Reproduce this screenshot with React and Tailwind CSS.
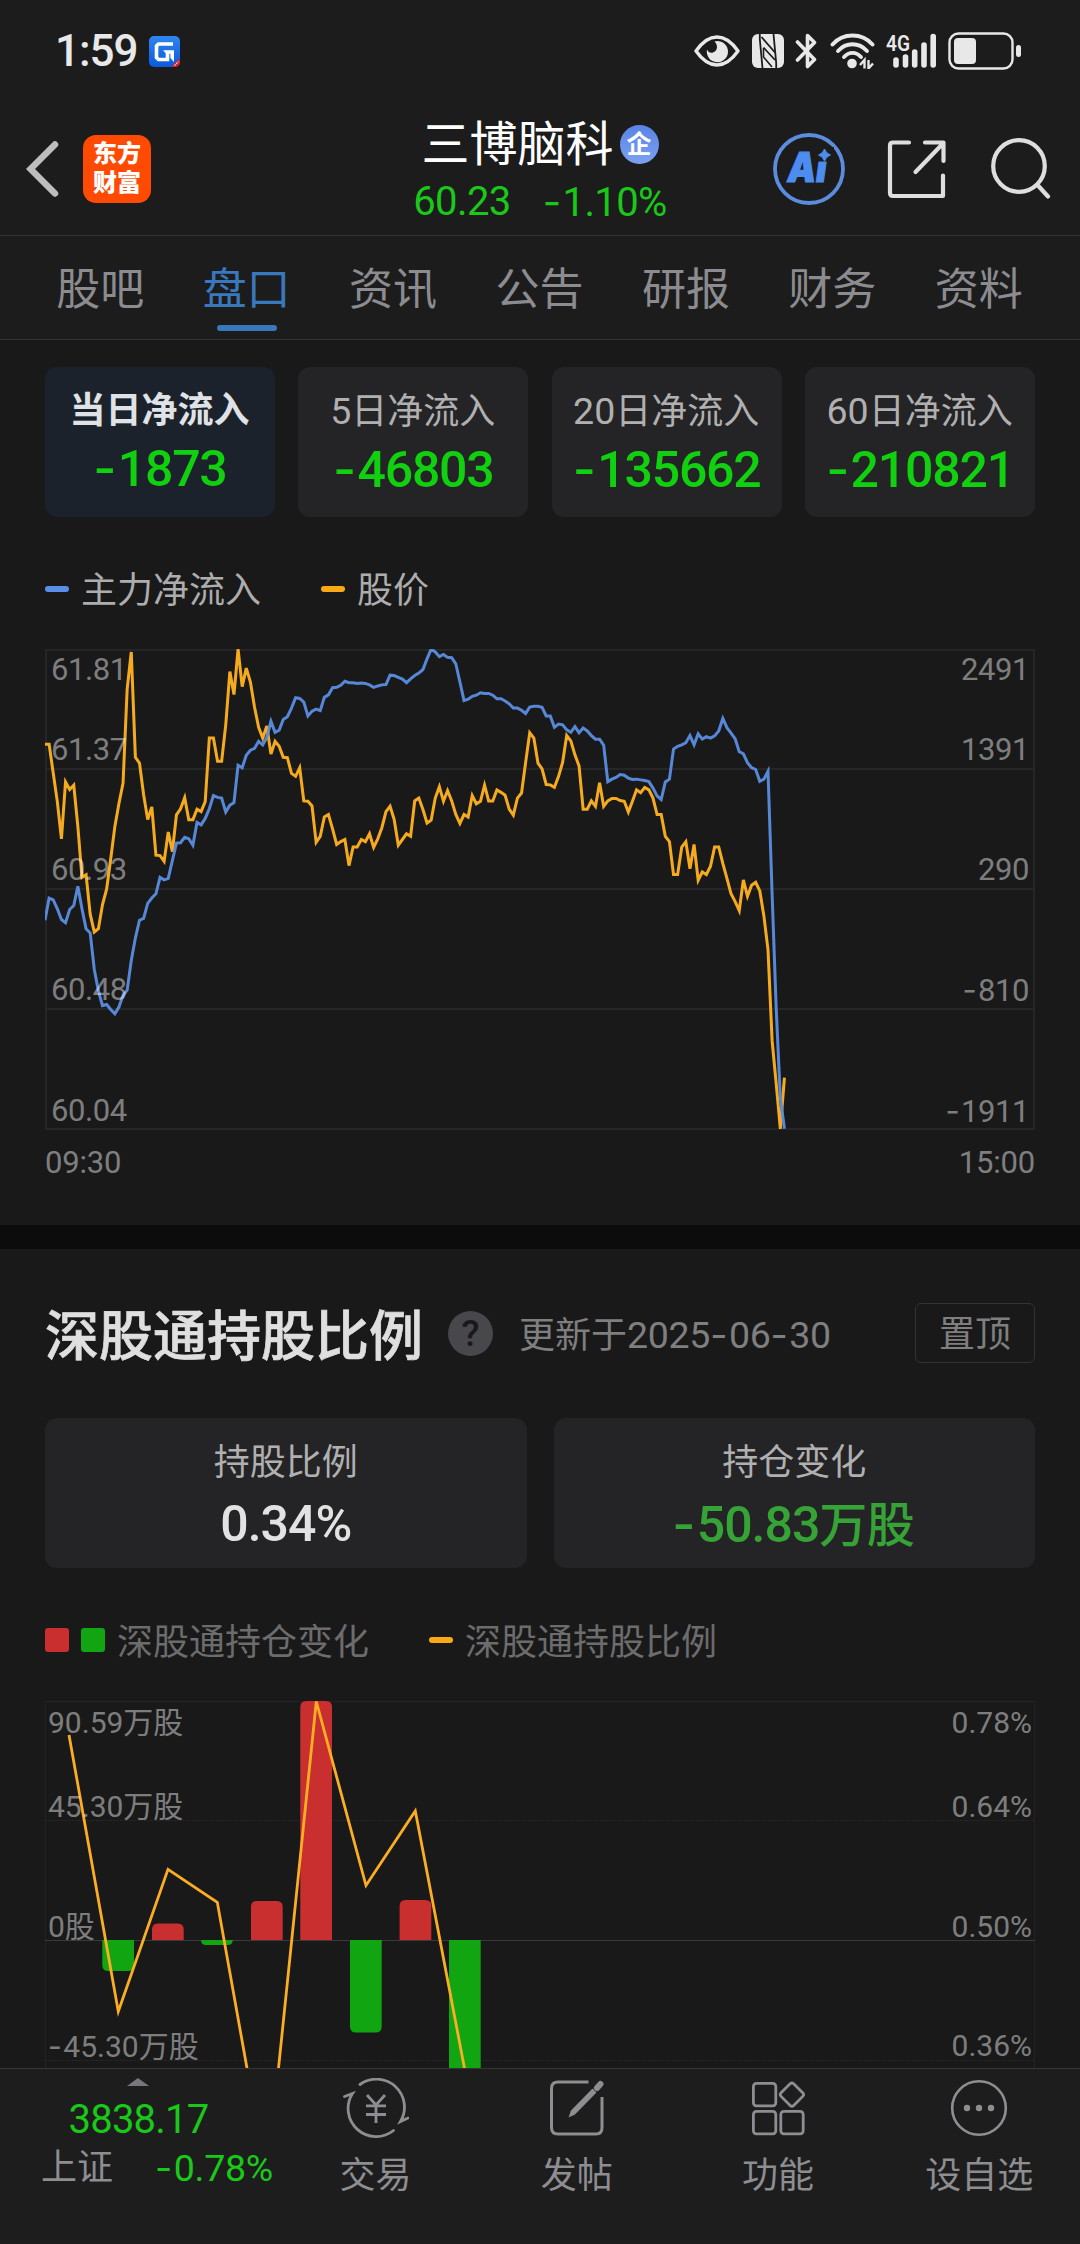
import React from "react";

const FLOW = [
  812, 750, 755, 780, 810, 819, 782, 771, 717, 780, 836, 848, 950, 1010, 1051, 1048, 1062, 1074, 1055, 1022,
  1008, 925, 862, 812, 807, 765, 750, 738, 692, 699, 695, 645, 596, 595, 580, 584, 602, 538, 545, 527,
  500, 463, 468, 470, 509, 490, 483, 378, 385, 350, 336, 331, 311, 321, 300, 255, 286, 280, 250, 242,
  218, 189, 191, 201, 240, 227, 221, 225, 188, 181, 161, 160, 154, 143, 147, 147, 149, 148, 149, 153,
  160, 156, 153, 152, 126, 127, 132, 137, 147, 136, 127, 120, 110, 80, 53, 61, 74, 68, 76, 77,
  94, 145, 197, 193, 185, 182, 175, 177, 177, 182, 192, 192, 198, 206, 218, 218, 224, 233, 215, 213,
  213, 216, 240, 240, 272, 263, 265, 279, 286, 270, 287, 274, 282, 295, 305, 305, 322, 424, 417, 412,
  404, 406, 414, 418, 417, 419, 421, 424, 442, 464, 474, 425, 417, 333, 325, 321, 315, 295, 321, 290,
  305, 298, 302, 296, 282, 247, 273, 288, 304, 340, 346, 371, 385, 390, 423, 417, 395, 740, 1060, 1310,
  1396,
];

const PRICE = [
  319, 319, 400, 480, 584, 425, 446, 434, 550, 692, 685, 795, 845, 836, 768, 725, 640, 550, 485, 428,
  165, 61, 356, 372, 460, 530, 495, 630, 631, 647, 565, 620, 517, 500, 469, 531, 531, 501, 508, 480,
  302, 302, 367, 367, 265, 116, 180, 53, 158, 106, 145, 215, 272, 302, 268, 347, 311, 325, 356, 357,
  401, 409, 385, 478, 479, 492, 594, 577, 523, 516, 556, 600, 592, 586, 659, 607, 607, 586, 592, 570,
  608, 584, 553, 508, 493, 530, 602, 586, 570, 577, 478, 470, 502, 540, 532, 470, 438, 479, 449, 478,
  516, 541, 516, 523, 463, 486, 479, 434, 478, 478, 447, 454, 462, 501, 518, 470, 456, 370, 287, 302,
  372, 388, 432, 433, 440, 410, 370, 295, 310, 349, 380, 501, 501, 478, 493, 427, 493, 478, 471, 471,
  477, 479, 509, 479, 447, 455, 440, 447, 470, 516, 516, 577, 592, 684, 684, 607, 592, 668, 600, 700,
  677, 684, 661, 607, 607, 653, 695, 738, 760, 785, 699, 745, 714, 706, 730, 800, 895, 1150, 1270, 1396,
  1253,
];

const toPoints = (list) =>
  list.map((v, i) => `${(i * 4.108).toFixed(2)},${((v - 54) / 2.8).toFixed(2)}`).join(" ");

/* Figures whose minus sign is set in a wider face than the digits. */
function Num({ children }) {
  return String(children)
    .split(/(-)/)
    .map((part, i) =>
      part === "-" ? (
        <span key={i} className="mr-[0.05em] font-['Inter']">
          -
        </span>
      ) : (
        part
      )
    );
}

function StatusBar() {
  return (
    <div className="flex h-[102px] items-center pl-[55px] pr-[58px] text-[#e8e8e8]">
      <span className="text-[44px] font-medium leading-[48px] tracking-[-1px]">1:59</span>
      <svg className="ml-[11px]" width="31" height="31" viewBox="0 0 31 31">
        <defs>
          <linearGradient id="gApp" x1="0" y1="0" x2="0" y2="1">
            <stop offset="0" stopColor="#2f86ee" />
            <stop offset="1" stopColor="#0a5ae0" />
          </linearGradient>
          <clipPath id="gClip">
            <rect width="31" height="31" rx="5" />
          </clipPath>
        </defs>
        <g clipPath="url(#gClip)">
          <rect width="31" height="31" fill="url(#gApp)" />
          <path d="M24 8H9.5L7.5 10V21.5L9.5 23.5H18.5V16" fill="none" stroke="#fff" strokeWidth="3.6" />
          <path d="M14 14.2H25V26L21.4 22V17.8H17.2Z" fill="#fff" />
          <path d="M22 31L31 22V31Z" fill="#d8202c" />
          <path d="M25.500 29.500L29.500 25.500" stroke="#ffd5d5" strokeWidth="1.300" strokeDasharray="1.500 1" />
        </g>
      </svg>
      <div className="flex-1" />
      <svg width="46" height="32" viewBox="0 0 46 32">
        <path d="M2 16C9 6 15.500 2 23 2S37 6 44 16C37 26 30.500 30 23 30S9 26 2 16Z" fill="none" stroke="currentColor" strokeWidth="3.400" strokeLinejoin="round" />
        <path d="M20.500 6.400A10.600 10.600 0 1 1 13 14.500C14 17 16.500 18.500 19 17.500C23.500 16 24.500 10 20.500 6.400Z" fill="currentColor" />
      </svg>
      <svg className="ml-[12px]" width="32" height="34" viewBox="0 0 32 34">
        <rect width="32" height="34" rx="6" fill="currentColor" />
        <path d="M7.800 0V5L10.500 34M24.200 34V29L21.500 0" fill="none" stroke="#1c1c1c" strokeWidth="1.800" />
        <path d="M9.500 3L23 18.500M11.500 13.500L23 26" fill="none" stroke="#1c1c1c" strokeWidth="1.800" />
        <path d="M11.500 14V23L20 33" fill="none" stroke="#1c1c1c" strokeWidth="1.600" />
      </svg>
      <svg className="ml-[11px]" width="23" height="36" viewBox="0 0 23 36">
        <path d="M2.500 9L19.500 26.500L12.500 33.500V2.500L19.500 9.500L2.500 27" fill="none" stroke="currentColor" strokeWidth="3.600" strokeLinecap="round" strokeLinejoin="round" />
      </svg>
      <svg className="ml-[12px]" width="45" height="36" viewBox="0 0 45 36">
        <g fill="none" stroke="currentColor" strokeWidth="3.900" strokeLinecap="round">
          <path d="M2.500 11.500C13 -0.500 32 -0.500 42.500 11.500" />
          <path d="M8 18C16 9 29 9 37 18" />
          <path d="M14 24C19 18.500 26 18.500 31 24" />
        </g>
        <circle cx="22" cy="30.500" r="4.800" fill="currentColor" />
        <path d="M30 32L34.500 27V35.500M38.500 27V35.500L43 30.500" fill="none" stroke="currentColor" strokeWidth="2.400" />
      </svg>
      <svg className="ml-[7px]" width="55" height="48" viewBox="-4 -6 55 48">
        <text x="0" y="17.500" fontFamily="Roboto" fontWeight="600" fontSize="22" textLength="24" lengthAdjust="spacingAndGlyphs" fill="currentColor">
          4G
        </text>
        <g stroke="currentColor" strokeWidth="5.600" strokeLinecap="round">
          <path d="M10 27V32M19.500 24V32M28.700 19V32M38 12V32M47.200 3.500V32" />
        </g>
      </svg>
      <svg className="ml-[11px]" width="74" height="38" viewBox="0 0 74 38">
        <rect x="1.500" y="1.500" width="63" height="35" rx="9" fill="none" stroke="currentColor" strokeWidth="2.400" />
        <rect x="6" y="6" width="22" height="26" rx="4" fill="currentColor" />
        <rect x="68" y="13" width="5" height="12" rx="2.500" fill="currentColor" />
      </svg>
    </div>
  );
}

function Header() {
  return (
    <div className="grid h-[134px] grid-cols-[1fr_auto_1fr] items-center border-b border-[#333333]">
      <div className="flex items-center pl-[26px]">
        <svg width="34" height="58" viewBox="0 0 34 58">
          <path d="M29 4.500L4.500 29L29 53.500" fill="none" stroke="#bdbdbd" strokeWidth="6.500" strokeLinecap="round" strokeLinejoin="miter" />
        </svg>
        <div className="ml-[23px] flex h-[68px] w-[68px] flex-col items-center justify-center rounded-[13px] bg-[#ff4a04] text-[24px] font-black leading-[29px] text-white">
          <span>东方</span>
          <span>财富</span>
        </div>
      </div>
      <div className="flex flex-col items-center pt-[8px]">
        <div className="flex items-center">
          <span className="text-[48px] leading-[54px] text-white">三博脑科</span>
          <span className="ml-[6px] flex h-[39px] w-[39px] items-center justify-center rounded-full bg-gradient-to-b from-[#5a82e6] to-[#7ba2ef] text-[25px] font-bold leading-none text-white">
            企
          </span>
        </div>
        <div className="mt-[5px] flex gap-[32px] text-[40px] leading-[50px] tracking-[-0.6px] text-[#1ac81a]">
          <span>60.23</span>
          <span>
            <Num>-1.10%</Num>
          </span>
        </div>
      </div>
      <div className="flex items-center justify-end pr-[29px]">
        <svg width="74" height="74" viewBox="0 0 74 74">
          <circle cx="37" cy="37" r="34" fill="none" stroke="#5b8cdd" strokeWidth="3.800" />
          <text transform="translate(14 50) skewX(-8)" fontFamily="Inter" fontWeight="900" fontSize="41" fill="#4e8df0" stroke="#4e8df0" strokeWidth="1.200" textLength="39" lengthAdjust="spacingAndGlyphs">
            Ai
          </text>
          <rect x="44" y="15" width="18" height="14.500" fill="#1c1c1c" />
          <path d="M52.500 17Q54 21.500 58.500 23Q54 24.500 52.500 29Q51 24.500 46.500 23Q51 21.500 52.500 17Z" fill="#4e8df0" stroke="#4e8df0" />
        </svg>
        <svg className="ml-[41px]" width="60" height="60" viewBox="0 0 60 60" fill="none" stroke="#dedede" strokeWidth="4.200" strokeLinecap="round" strokeLinejoin="round">
          <path d="M22 3.500H6Q3 3.500 3 6.500V54Q3 57 6 57H56V36.500" />
          <path d="M38 3.500H56.500V22M56 4.500L28.500 33" />
        </svg>
        <svg className="-mt-[2px] ml-[42px]" width="62" height="62" viewBox="0 0 62 62" fill="none" stroke="#dedede" strokeWidth="4.200" strokeLinecap="round">
          <circle cx="30" cy="29" r="25.800" />
          <path d="M48.500 48L59 59.500" />
        </svg>
      </div>
    </div>
  );
}

const TABS = ["股吧", "盘口", "资讯", "公告", "研报", "财务", "资料"];

function Tabs() {
  return (
    <div className="flex h-[104px] items-stretch border-b border-[#343434] pl-[27px] pr-[28px]">
      {TABS.map((t) => {
        const active = t === "盘口";
        return (
          <div key={t} className={active ? "flex flex-1 flex-col items-center text-[#3a78bd]" : "flex flex-1 flex-col items-center text-[#8b8b90]"}>
            <span className="mt-[24px] text-[44px] leading-[60px]">{t}</span>
            {active && <span className="mt-[5px] h-[6px] w-[60px] rounded-full bg-[#3a78bd]" />}
          </div>
        );
      })}
    </div>
  );
}

const CARDS = [
  ["", "当日净流入", "-1873"],
  ["5", "日净流入", "-46803"],
  ["20", "日净流入", "-135662"],
  ["60", "日净流入", "-210821"],
];

function FlowCards() {
  return (
    <div className="grid grid-cols-4 gap-[23.5px]">
      {CARDS.map(([n, label, value], i) => (
        <div key={value} className={i === 0 ? "flex h-[150px] flex-col items-center rounded-xl bg-[#1b222b]" : "flex h-[150px] flex-col items-center rounded-xl bg-[#242426]"}>
          <span className={i === 0 ? "mr-px mt-[20px] text-[36px] font-bold leading-[48px] text-[#e0e3e6]" : "mr-px mt-[20px] text-[36px] leading-[48px] text-[#b0b0b1]"}>
            {n && <span className="text-[37.5px]">{n}</span>}
            {label}
          </span>
          <span className="mt-[3px] text-[50px] font-medium leading-[60px] tracking-[-1.2px] text-[#10d010]">
            <Num>{value}</Num>
          </span>
        </div>
      ))}
    </div>
  );
}

const FLOW_AXIS = [
  ["61.81", "2491"],
  ["61.37", "1391"],
  ["60.93", "290"],
  ["60.48", "-810"],
  ["60.04", "-1911"],
];

function FlowChart() {
  return (
    <div className="relative mt-[40px] h-[481px]">
      <svg className="block" width="990" height="481" viewBox="0 -0.5 990 481">
        <g fill="none" stroke="#262628" strokeWidth="2">
          <rect x="1" y="0.500" width="988" height="479" />
          <path d="M0 119.500H990M0 239.500H990M0 359.500H990" />
        </g>
        <g fill="none" strokeWidth="3" strokeLinejoin="miter">
          <polyline points={toPoints(PRICE)} stroke="#f6ab1f" />
          <polyline points={toPoints(FLOW)} stroke="#5a8ee2" strokeOpacity="0.95" />
        </g>
      </svg>
      <div className="absolute inset-0 text-[31px] leading-[36px] tracking-[-0.4px] text-white/45">
        {FLOW_AXIS.map(([l, r], i) => (
          <div key={l} className={i === 0 ? "flex justify-between pl-[6px] pr-[6px] pt-[3px]" : i === 1 ? "mt-[44px] flex justify-between pl-[6px] pr-[6px]" : "mt-[84px] flex justify-between pl-[6px] pr-[6px]"}>
            <span>{l}</span>
            <span>
              <Num>{r}</Num>
            </span>
          </div>
        ))}
      </div>
    </div>
  );
}

const BARS = [
  [57.3, 239, 31, "g"],
  [107, 222.5, 16.5, "r"],
  [156, 239, 5, "g"],
  [206, 200, 39, "r"],
  [255.3, 0, 239, "r"],
  [305, 239, 92.5, "g"],
  [354.6, 199, 40, "r"],
  [404, 239, 200, "g"],
];

function barPath([x, y, h, kind]) {
  const w = 31.7;
  const r = Math.min(6, h);
  return kind === "r"
    ? `M${x} ${y + h}V${y + r}Q${x} ${y} ${x + r} ${y}H${x + w - r}Q${x + w} ${y} ${x + w} ${y + r}V${y + h}Z`
    : `M${x} ${y}V${y + h - r}Q${x} ${y + h} ${x + r} ${y + h}H${x + w - r}Q${x + w} ${y + h} ${x + w} ${y + h - r}V${y}Z`;
}

function HoldingChart() {
  return (
    <div className="relative mt-[35px] h-[480px]">
      <svg className="block" width="990" height="480" viewBox="0 0 990 480">
        <g fill="none" stroke="#232325" strokeWidth="1">
          <rect x="0.500" y="0.500" width="989" height="479" />
          <path d="M0 119.500H990M0 359.500H990" stroke="#2b2b2d" strokeDasharray="1.500 1.500" />
          <path d="M0 239.500H990" stroke="#3a3a3c" />
        </g>
        {BARS.map((b) => (
          <path key={b[0]} d={barPath(b)} fill={b[3] === "r" ? "#ca2f2f" : "#12a512"} />
        ))}
        <path d="M24 34L73.300 310.500L123 168.300L172.300 201.300L222 479L271.300 0.500L321 184.500L370.300 110L420 370" fill="none" stroke="#fbae24" strokeWidth="2.800" />
      </svg>
      <div className="absolute inset-0 text-[30px] leading-[36px] text-white/45">
        <div className="flex justify-between pl-[3px] pr-[3px] pt-[4px]">
          <span>90.59万股</span>
          <span>0.78%</span>
        </div>
        <div className="mt-[48px] flex justify-between pl-[3px] pr-[3px]">
          <span>45.30万股</span>
          <span>0.64%</span>
        </div>
        <div className="mt-[84px] flex justify-between pl-[3px] pr-[3px]">
          <span>0股</span>
          <span>0.50%</span>
        </div>
        <div className="mt-[83px] flex justify-between pl-[3px] pr-[3px]">
          <span>
            <Num>-45.30万股</Num>
          </span>
          <span>0.36%</span>
        </div>
      </div>
    </div>
  );
}

function Dash({ blue }) {
  return <span className={blue ? "h-[6px] w-[24px] rounded-[3px] bg-[#5a8ee8]" : "h-[6px] w-[24px] rounded-[3px] bg-[#f9a915]"} />;
}

function BottomNav() {
  return (
    <div className="flex h-[176px] shrink-0 border-t border-[#363636] bg-[#1d1d1d] text-[#8d8d92]">
      <div className="flex w-[275px] flex-col items-center">
        <svg className="mt-[9px]" width="22" height="8" viewBox="0 0 22 8">
          <path d="M0 8L11 0L22 8Z" fill="#77777c" />
        </svg>
        <span className="ml-[2px] mt-[11px] text-[40px] leading-[46px] tracking-[-0.8px] text-[#1ac81a]">3838.17</span>
        <div className="ml-[41px] mt-[3px] flex items-center gap-[42px] self-start whitespace-nowrap leading-[44px]">
          <span className="text-[36px]">上证</span>
          <span className="text-[37.500px] tracking-[-0.3px] text-[#1ac81a]">
            <Num>-0.78%</Num>
          </span>
        </div>
      </div>
      <div className="grid flex-1 grid-cols-4">
        <NavItem label="交易">
          <svg width="66" height="60" viewBox="0 0 66 60" fill="none" stroke="currentColor" strokeWidth="2.800" strokeLinecap="round">
            <path d="M17 6.500A28 28 0 0 1 57.500 43.500L65 40" />
            <path d="M50.500 52.500A28 28 0 0 1 9.500 15.500L1.500 18.500" />
            <path d="M24 17L33 27L42 17M23 27.800H43M23 36.500H43M33 27V45" strokeLinecap="butt" />
          </svg>
        </NavItem>
        <NavItem label="发帖">
          <svg width="56" height="58" viewBox="0 0 56 58" fill="none" stroke="currentColor" strokeWidth="3">
            <path d="M39.500 3H9Q2.500 3 2.500 9.500V48.500Q2.500 55 9 55H47Q53 55 53 48.500V18" />
            <path d="M19.500 38.500L22 31.500L43.500 9.500L47.500 13.500L26 35.500Z" fill="currentColor" stroke="none" />
            <path d="M48 9L51.500 5" strokeWidth="6" strokeLinecap="round" />
          </svg>
        </NavItem>
        <NavItem label="功能">
          <svg width="54" height="58" viewBox="0 0 54 58" fill="none" stroke="currentColor" strokeWidth="2.800">
            <rect x="2.400" y="4.400" width="22.400" height="22.400" rx="3" />
            <rect x="2.400" y="32.400" width="22.400" height="22.400" rx="3" />
            <rect x="29.800" y="32.400" width="22.400" height="22.400" rx="3" />
            <rect x="32" y="6.700" width="17.800" height="17.800" rx="2.500" transform="rotate(45 40.900 15.600)" />
          </svg>
        </NavItem>
        <NavItem label="设自选">
          <svg width="58" height="58" viewBox="0 0 58 58">
            <circle cx="29" cy="29" r="26.800" fill="none" stroke="currentColor" strokeWidth="2.600" />
            <circle cx="17" cy="29" r="3.200" fill="currentColor" />
            <circle cx="29" cy="29" r="3.200" fill="currentColor" />
            <circle cx="41" cy="29" r="3.200" fill="currentColor" />
          </svg>
        </NavItem>
      </div>
    </div>
  );
}

function NavItem({ label, children }) {
  return (
    <div className="flex flex-col items-center pt-[9px]">
      <div className="flex h-[60px] items-center">{children}</div>
      <span className="mt-[16px] text-[36px] leading-[44px]">{label}</span>
    </div>
  );
}

export default function App() {
  return (
    <div className="flex h-[2244px] w-[1080px] flex-col overflow-hidden bg-[#19191a] font-['Roboto','Noto_Sans_CJK_SC',sans-serif]">
      <div className="shrink-0 bg-[#1c1c1c]">
        <StatusBar />
        <Header />
        <Tabs />
      </div>
      <div className="min-h-0 flex-1 overflow-hidden">
        <section className="h-[885px] px-[45px] pt-[27px]">
          <FlowCards />
          <div className="mt-[51px] flex h-[41px] items-center gap-3 text-[36px] leading-[41px] text-[#adadae]">
            <Dash blue />
            <span className="pt-[5px]">主力净流入</span>
            <span className="w-[36px]" />
            <Dash />
            <span className="pt-[5px]">股价</span>
          </div>
          <FlowChart />
          <div className="mt-[15px] flex justify-between text-[31px] leading-[36px] tracking-[-0.2px] text-[#7f7f80]">
            <span>09:30</span>
            <span>15:00</span>
          </div>
        </section>
        <div className="h-6 bg-[#0c0c0c]" />
        <section className="px-[45px] pt-[54px]">
          <div className="flex h-[60px] items-center">
            <h2 className="pt-[9px] text-[54px] font-medium leading-[60px] text-[#dfdfe0] [-webkit-text-stroke:0.7px_#dfdfe0]">深股通持股比例</h2>
            <span className="ml-[25px] flex h-[45px] w-[45px] items-center justify-center rounded-full bg-[#47474c] text-[37px] font-medium leading-none text-[#19191a]">?</span>
            <span className="ml-[26px] pt-[4px] text-[36px] leading-[44px] text-[#7f7f80]">
              更新于
              <span className="text-[37.500px] tracking-[-0.3px]">
                <Num>2025-06-30</Num>
              </span>
            </span>
            <span className="ml-auto flex h-[60px] w-[120px] items-center justify-center rounded-md border border-[#333335] pt-[3px] text-[36px] leading-[44px] text-[#7f7f80]">置顶</span>
          </div>
          <div className="mt-[55px] grid grid-cols-2 gap-[27px]">
            <div className="flex h-[150px] flex-col items-center rounded-xl bg-[#242426]">
              <span className="mt-[21px] text-[36px] leading-[48px] text-[#b0b0b1]">持股比例</span>
              <span className="mt-[7px] text-[50px] font-medium leading-[60px] tracking-[-1px] text-[#e2e2e3]">0.34%</span>
            </div>
            <div className="flex h-[150px] flex-col items-center rounded-xl bg-[#242426]">
              <span className="mt-[21px] text-[36px] leading-[48px] text-[#b0b0b1]">持仓变化</span>
              <span className="mr-[2px] mt-[7px] text-[50px] font-medium leading-[60px] tracking-[-1px] text-[#36a336]">
                <Num>-50.83</Num>
                <span className="text-[48px] tracking-[-0.5px]">万股</span>
              </span>
            </div>
          </div>
          <div className="mt-[49px] flex h-[46px] items-center gap-3 text-[36px] leading-[46px] text-[#6c6c6d]">
            <span className="h-6 w-6 rounded-[3px] bg-[#ca2f2f]" />
            <span className="h-6 w-6 rounded-[3px] bg-[#12a512]" />
            <span className="pt-[5px]">深股通持仓变化</span>
            <span className="w-[36px]" />
            <Dash />
            <span className="pt-[5px]">深股通持股比例</span>
          </div>
          <div className="h-[3px]" />
          <HoldingChart />
        </section>
      </div>
      <BottomNav />
    </div>
  );
}
